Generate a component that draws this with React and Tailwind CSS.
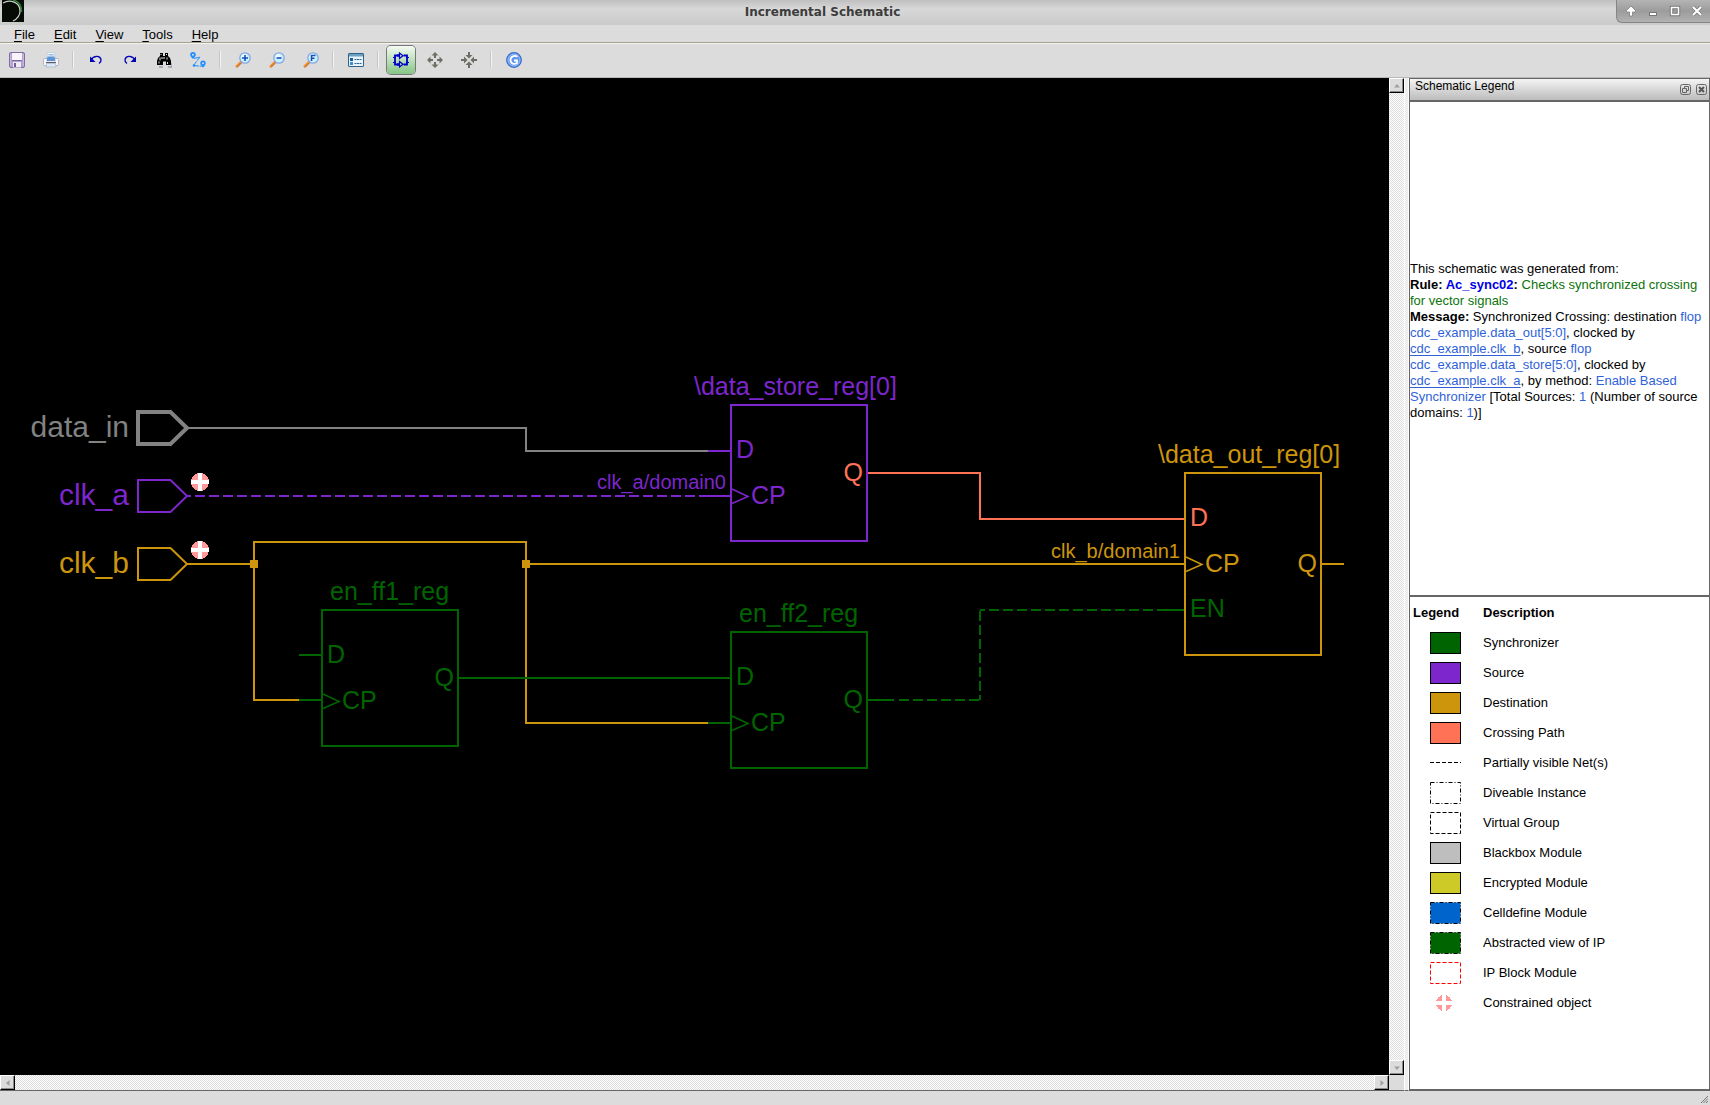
import React, { useState } from 'react';

const GREEN = '#006400';
const PURPLE = '#7d26cd';
const GOLD = '#cd950c';
const CORAL = '#ff7256';
const GRAY = '#828282';

/* ---------- toolbar icons ---------- */

const SaveIcon = () => (
  <svg viewBox="0 0 16 16" className="size-4">
    <rect x="0.5" y="0.5" width="15" height="15" rx="1.5" fill="#b3a0cf" stroke="#806ba2" />
    <rect x="3" y="1" width="10" height="7" fill="#f7f5fb" />
    <path d="M3 8.5h10" stroke="#8069a5" />
    <rect x="4" y="10" width="8" height="5.5" fill="#eeebf5" />
    <rect x="5" y="11" width="2" height="4" fill="#6f5a94" />
    <path d="M1.5 2v12M14.5 2v12" stroke="#c8b9de" />
  </svg>
);

const PrintIcon = () => (
  <svg viewBox="0 0 16 16" className="size-4">
    <path d="M4.500 0.500h7l1 6h-9z" fill="#eef4fc" stroke="#b8c8dc" strokeWidth="0.700" />
    <path d="M0.500 7.500q0-1 1-1h13q1 0 1 1v5q0 1-1 1h-13q-1 0-1-1z" fill="#f8f8fa" stroke="#a4a8b4" strokeWidth="0.800" />
    <path d="M4.500 4.500h7l1 4.500h-9z" fill="#5c94d4" />
    <path d="M5.500 2.500h5M5.500 4h5.500" stroke="#9dbfe6" />
    <path d="M3 10.500h10" stroke="#59606e" strokeWidth="1.200" />
    <path d="M3.500 11.500h9l.500 3.500h-10z" fill="#d9e8fa" stroke="#aab2c0" strokeWidth="0.700" />
  </svg>
);

const UndoIcon = () => (
  <svg viewBox="0 0 16 16" className="size-4">
    <path d="M2.500 8C6 3.500 12 3 13 7.500c.300 2-.500 3-2 4" fill="none" stroke="#0000b4" strokeWidth="1.300" />
    <path d="M2 4.500v5.500h5.500z" fill="#0000b4" />
  </svg>
);

const RedoIcon = () => (
  <svg viewBox="0 0 16 16" className="size-4">
    <path d="M13.500 8C10 3.500 4 3 3 7.500c-.300 2 .500 3 2 4" fill="none" stroke="#0000b4" strokeWidth="1.300" />
    <path d="M14 4.500v5.500H8.500z" fill="#0000b4" />
  </svg>
);

const FindIcon = () => (
  <svg viewBox="0 0 16 16" className="size-4">
    <path d="M3 15h4M12 15h4v-4" stroke="#9a9aa8" strokeWidth="1.500" fill="none" />
    <path d="M4 1h3v3h2V1h3v3l2 2 1 3v4h-5V9.500H7V13H1V9l1-3 2-2z" fill="#000" />
    <path d="M5 2v1M10.500 2v1M4 5.500v3M6 5v2M11 5.500v2M3 9.500v2M11.500 10v2M8 5v2" stroke="#fff" strokeWidth="0.900" />
  </svg>
);

const RouteIcon = () => (
  <svg viewBox="0 0 16 16" className="size-4">
    <path d="M3 0a2.800 2.800 0 0 1 2.800 2.800C5.800 4.500 3 7 3 7S.200 4.500.200 2.800A2.800 2.800 0 0 1 3 0z" fill="#1e8fff" />
    <path d="M13 8.500a2.700 2.700 0 0 1 2.700 2.700C15.700 13 13 15.500 13 15.500S10.300 13 10.300 11.200A2.700 2.700 0 0 1 13 8.500z" fill="#1e8fff" />
    <circle cx="3" cy="2.800" r="1" fill="#dcdcdc" />
    <circle cx="13" cy="11.200" r="1" fill="#dcdcdc" />
    <path d="M4 6.500l6-1.500-6.500 8.500 8 .800" fill="none" stroke="#1e8fff" strokeWidth="1" strokeDasharray="5 0.800" />
    <circle cx="4" cy="13.500" r="1.300" fill="#1e8fff" />
  </svg>
);

const ZoomIcon = ({ children }) => (
  <svg viewBox="0 0 16 16" className="size-4">
    <path d="M6.500 9.500L1 15" stroke="#f08a24" strokeWidth="2.400" />
    <path d="M7 10.500L2 15.500" stroke="#a8502c" strokeWidth="0.800" />
    <circle cx="10" cy="6" r="5.200" fill="#c9f1fd" stroke="#86a6e6" strokeWidth="1.300" />
    <circle cx="9" cy="4.500" r="2.500" fill="#f2fdff" />
    <g stroke="#1450b4" strokeWidth="1.600" fill="none">{children}</g>
  </svg>
);

const ListIcon = () => (
  <svg viewBox="0 0 16 16" className="size-4">
    <rect x="0.500" y="1.500" width="15" height="13" rx="0.500" fill="#e8f4fc" stroke="#2f6288" />
    <rect x="1" y="2" width="14" height="2.500" fill="#6f9fbf" />
    <rect x="2" y="6" width="3" height="3" fill="#1c5a96" />
    <rect x="2" y="10" width="3" height="3" fill="#3f8fd0" />
    <path d="M6.500 7.500h7M6.500 11.500h7" stroke="#35638a" strokeDasharray="2 0.500" />
  </svg>
);

const SchematicIcon = () => (
  <svg viewBox="0 0 16 16" className="size-4" fill="none" stroke="#0000c8">
    <path d="M6.500 1v5.500L10 3.700zM6.500 9.500V15l3.500-2.700z" strokeWidth="1.200" />
    <path d="M6 3.500H2v9h4M10.500 3.500h3.500v9h-3.500" strokeWidth="1.800" />
    <path d="M0 5.500h3M0 10.500h3M13 5.500h3M13 10.500h3M5 2v3M5 11v3" strokeWidth="1.200" />
  </svg>
);

const ExpandIcon = () => (
  <svg viewBox="0 0 16 16" className="size-4" fill="#6e6e66">
    <path d="M8 0l3.500 3.500h-2.500v2.500H7V3.500H4.500zM8 16l3.500-3.500h-2.500V10H7v2.500H4.500zM0 8l3.500-3.500v2.500H6v2H3.500v2.500zM16 8l-3.500-3.500v2.500H10v2h2.500v2.500z" />
  </svg>
);

const CollapseIcon = () => (
  <svg viewBox="0 0 16 16" className="size-4" fill="#6e6e66">
    <path d="M8 6.500L4.500 3H7V0h2v3h2.500zM8 9.500L4.500 13H7v3h2v-3h2.500zM6.500 8L3 4.500V7H0v2h3v2.500zM9.500 8L13 4.500V7h3v2h-3v2.500z" />
  </svg>
);

const RefreshIcon = () => (
  <svg viewBox="0 0 16 16" className="size-4">
    <circle cx="8" cy="8" r="7.300" fill="#5f97ee" stroke="#3a68cc" strokeWidth="1.200" />
    <circle cx="8" cy="8" r="6" fill="none" stroke="#a8c8f8" strokeWidth="0.800" />
    <path d="M11.500 4.800C8.500 2.800 4.500 4.500 4.500 8s4 5 6.500 3V8.500H8" fill="none" stroke="#fff" strokeWidth="1.800" />
  </svg>
);

const LogoIcon = () => (
  <svg viewBox="0 0 22 22" className="size-[22px]">
    <rect width="22" height="22" fill="#060b06" />
    <path d="M11 0Q20 2 19.500 12" fill="none" stroke="#2f7a35" strokeWidth="1.500" />
    <path d="M1 3C8-1 18 2 18 11c0 5-3 8-7 10" fill="none" stroke="#c8d0c8" strokeWidth="1.200" />
  </svg>
);

const TOOL_GROUPS = [
  [
    { name: 'Save', icon: <SaveIcon /> },
    { name: 'Print', icon: <PrintIcon /> },
  ],
  [
    { name: 'Undo', icon: <UndoIcon /> },
    { name: 'Redo', icon: <RedoIcon /> },
    { name: 'Find', icon: <FindIcon /> },
    { name: 'Trace path', icon: <RouteIcon /> },
  ],
  [
    { name: 'Zoom in', icon: <ZoomIcon><path d="M7 6h6M10 3v6" /></ZoomIcon> },
    { name: 'Zoom out', icon: <ZoomIcon><path d="M7.500 6h5" /></ZoomIcon> },
    { name: 'Zoom fit', icon: <ZoomIcon><path d="M8.500 9V3.500h4M8.500 6.200h3" /></ZoomIcon> },
  ],
  [{ name: 'Legend', icon: <ListIcon /> }],
  [
    { name: 'Incremental mode', icon: <SchematicIcon /> },
    { name: 'Expand', icon: <ExpandIcon /> },
    { name: 'Collapse', icon: <CollapseIcon /> },
  ],
  [{ name: 'Reload', icon: <RefreshIcon /> }],
];

const MENUS = ['File', 'Edit', 'View', 'Tools', 'Help'];

/* ---------- window chrome ---------- */

const TitleBar = () => (
  <header className="flex h-[25px] shrink-0 items-start bg-linear-to-b from-[#bfbfbf] via-[#d8d8d8] via-35% to-[#cacaca]">
    <div className="pl-0.5"><LogoIcon /></div>
    <h1 className="flex-1 pl-[5px] text-center font-['DejaVu_Sans'] text-[12px] leading-[25px] font-bold text-[#3c3c3c]">
      Incremental Schematic
    </h1>
    <div className="flex h-[23px] w-[94px] items-center gap-2.5 rounded-bl-md border-b border-l border-[#858585] bg-linear-to-b from-[#b4b4b4] via-[#9c9c9c] to-[#b2b2b2] pl-2">
      <button aria-label="Shade">
        <svg viewBox="0 0 12 12" className="size-3" stroke="#777" strokeWidth="0.700" fill="#fff">
          <path d="M6 1l5 5-1 1H7.500v4h-3V7H2L1 6z" />
        </svg>
      </button>
      <button aria-label="Minimize">
        <svg viewBox="0 0 12 12" className="size-3"><rect x="2.500" y="7.500" width="7" height="3" fill="#fff" stroke="#777" /></svg>
      </button>
      <button aria-label="Maximize">
        <svg viewBox="0 0 12 12" className="size-3" fill="none">
          <rect x="2.500" y="2.500" width="7" height="7" stroke="#777" strokeWidth="3.500" />
          <rect x="2.500" y="2.500" width="7" height="7" stroke="#fff" strokeWidth="1.500" />
        </svg>
      </button>
      <button aria-label="Close">
        <svg viewBox="0 0 12 12" className="size-3">
          <path d="M2 2l8 8M10 2l-8 8" stroke="#777" strokeWidth="3.600" />
          <path d="M2 2l8 8M10 2l-8 8" stroke="#fff" strokeWidth="2.200" />
        </svg>
      </button>
    </div>
  </header>
);

const MenuBar = () => (
  <nav className="flex h-[19px] shrink-0 gap-[19px] border-b border-[#f5f3ee] pt-0.5 pl-3.5 text-[13px] leading-4 text-black shadow-[inset_0_-1px_0_#a5a294]">
    {MENUS.map((menu) => (
      <button key={menu}>
        <span className="underline underline-offset-2">{menu[0]}</span>{menu.slice(1)}
      </button>
    ))}
  </nav>
);

const ToolBar = ({ active, onSelect }) => (
  <div className="flex h-[34px] shrink-0 items-center border-b border-[#b9b9b9] pb-0.5">
    {TOOL_GROUPS.map((group, i) => (
      <React.Fragment key={i}>
        {i > 0 && <div className="mx-[5px] h-[17px] w-px bg-[#f4f4f4] shadow-[-1px_0_0_#c6c6c6]" />}
        {group.map((tool) => (
          <button
            key={tool.name}
            aria-label={tool.name}
            onClick={() => onSelect(tool.name)}
            className={`mx-[3px] flex size-7 items-center justify-center rounded-[4px] ${
              active === tool.name ? 'bg-linear-to-b from-[#f4faf3] to-[#84c484] ring-1 ring-[#777]' : ''
            }`}
          >
            {tool.icon}
          </button>
        ))}
      </React.Fragment>
    ))}
  </div>
);

const ScrollButton = ({ label, d }) => (
  <button
    aria-label={label}
    className="flex size-[15px] shrink-0 items-center justify-center border border-t-white border-r-black border-b-black border-l-white bg-[#dcdcdc] shadow-[inset_-1px_-1px_0_#8c8c8c]"
  >
    <svg viewBox="0 0 8 8" className="size-2"><path d={d} fill="#a0a0a0" /></svg>
  </button>
);

/* ---------- schematic ---------- */

const Wire = ({ d, color, dash, offset }) => (
  <path d={d} fill="none" stroke={color} strokeWidth="2" strokeDasharray={dash ? '10 4' : undefined} strokeDashoffset={offset} shapeRendering="crispEdges" />
);

const Port = ({ y, label, color, width = 2 }) => (
  <g>
    <text x="129" y={y + 9} textAnchor="end" fontSize="30" fill={color}>{label}</text>
    <path d={`M138 ${y - 16}h32.500l16.500 16-16.500 16H138z`} fill="none" stroke={color} strokeWidth={width} />
  </g>
);

const Constrained = ({ x, y }) => (
  <g shapeRendering="crispEdges">
    <circle cx={x} cy={y} r="9" fill="#ff9999" />
    <path d={`M${x} ${y - 9}v18M${x - 9} ${y}h18`} stroke="#fff" strokeWidth="4" />
  </g>
);

const Flop = ({ x, y, name, nameX, color, height = 136, dColor = color, qColor = color, qWire = 68, enable }) => (
  <g fontSize="25">
    <rect x={x} y={y} width="136" height={height} fill="none" stroke={color} strokeWidth="2" shapeRendering="crispEdges" />
    <text x={nameX} y={y - 10} fill={color}>{name}</text>
    <text x={x + 5} y={y + 53} fill={dColor}>D</text>
    <path d={`M${x + 1} ${y + 84}l16 7.500-16 7`} fill="none" stroke={color} strokeWidth="1.500" />
    <text x={x + 20} y={y + 99} fill={color}>CP</text>
    {enable && <text x={x + 5} y={y + 144} fill={GREEN}>EN</text>}
    <text x={x + 132} y={y + qWire + 8} textAnchor="end" fill={qColor}>Q</text>
  </g>
);

const Schematic = () => (
  <svg
    viewBox="0 0 1389 997"
    preserveAspectRatio="xMidYMid meet"
    className="absolute inset-0 size-full font-['Liberation_Sans',sans-serif]"
    role="img"
    aria-label="Schematic"
  >
    {/* data_in */}
    <Wire d="M188 350H526V373H708" color={GRAY} />
    <Wire d="M708 373H731" color={PURPLE} />
    <Port y={350} label="data_in" color={GRAY} width={4} />

    {/* clk_a */}
    <Wire d="M187 418H699" color={PURPLE} dash offset="6" />
    <Wire d="M699 418H731" color={PURPLE} />
    <Port y={418} label="clk_a" color={PURPLE} />
    <text x="726" y="411" textAnchor="end" fontSize="20" fill={PURPLE}>clk_a/domain0</text>
    <Constrained x={200} y={404} />

    {/* clk_b */}
    <Wire d="M187 486H254M526 486H1185" color={GOLD} />
    <Wire d="M299 622H254V464H526V645H708" color={GOLD} />
    <Port y={486} label="clk_b" color={GOLD} />
    <text x="1180" y="480" textAnchor="end" fontSize="20" fill={GOLD}>clk_b/domain1</text>
    <rect x="250" y="482" width="8" height="8" fill={GOLD} />
    <rect x="522" y="482" width="8" height="8" fill={GOLD} />
    <Constrained x={200} y={472} />

    {/* enable synchronizer */}
    <Wire d="M299 577H322M299 622H322M458 600H731M708 645H731M867 622H894" color={GREEN} />
    <Wire d="M899 622H980" color={GREEN} dash />
    <Wire d="M980 533V622" color={GREEN} dash />
    <Wire d="M980 532H1157" color={GREEN} dash offset="5" />
    <Wire d="M1157 532H1185" color={GREEN} />

    {/* crossing path */}
    <Wire d="M867 395H980V441H1185" color={CORAL} />
    <Wire d="M1321 486H1344" color={GOLD} />

    <Flop x={322} y={532} name="en_ff1_reg" nameX={330} color={GREEN} />
    <Flop x={731} y={554} name="en_ff2_reg" nameX={739} color={GREEN} />
    <Flop x={731} y={327} name="\data_store_reg[0]" nameX={694} color={PURPLE} qColor={CORAL} />
    <Flop x={1185} y={395} name="\data_out_reg[0]" nameX={1158} color={GOLD} height={182} dColor={CORAL} qWire={91} enable />
  </svg>
);

/* ---------- legend dock ---------- */

const LEGEND = [
  { text: 'Synchronizer', fill: GREEN, stroke: '#000' },
  { text: 'Source', fill: PURPLE, stroke: '#000' },
  { text: 'Destination', fill: GOLD, stroke: '#000' },
  { text: 'Crossing Path', fill: CORAL, stroke: '#000' },
  { text: 'Partially visible Net(s)', line: true },
  { text: 'Diveable Instance', fill: 'none', stroke: '#000', dash: '4 2 1 2' },
  { text: 'Virtual Group', fill: 'none', stroke: '#000', dash: '4 2' },
  { text: 'Blackbox Module', fill: '#bebebe', stroke: '#000' },
  { text: 'Encrypted Module', fill: '#cdc926', stroke: '#000' },
  { text: 'Celldefine Module', fill: '#0064cd', stroke: '#000', dash: '4 2 1 2' },
  { text: 'Abstracted view of IP', fill: GREEN, stroke: '#000', dash: '4 2 1 2' },
  { text: 'IP Block Module', fill: 'none', stroke: '#ff0000', dash: '4 2' },
  { text: 'Constrained object', constrained: true },
];

const Swatch = ({ item }) => (
  <svg viewBox="0 0 31 22" className="block h-[22px] w-[31px]">
    {item.line && <path d="M0 10.500h31" stroke="#000" strokeDasharray="4 2" />}
    {item.constrained && (
      <g shapeRendering="crispEdges">
        <circle cx="14" cy="11" r="8" fill="#ff9999" />
        <path d="M14 2v18M5 11h18" stroke="#fff" strokeWidth="4" />
      </g>
    )}
    {item.fill && (
      <rect x="0.500" y="0.500" width="30" height="21" fill={item.fill} stroke={item.stroke} strokeDasharray={item.dash} />
    )}
  </svg>
);

const Blue = ({ children }) => <span className="text-[#2f62d9]">{children}</span>;

const RuleInfo = () => (
  <section className="flex h-[493px] shrink-0 items-center bg-white pb-4">
    <p className="text-[13px] leading-4 text-black">
      This schematic was generated from:<br />
      <b>Rule: <a href="#rule" className="text-[#0000e6]">Ac_sync02</a>:</b>{' '}
      <span className="text-[#0a730a]">Checks synchronized crossing for vector signals</span><br />
      <b>Message:</b> Synchronized Crossing: destination <Blue>flop cdc_example.data_out[5:0]</Blue>, clocked by{' '}
      <a href="#clk_b" className="text-[#2f62d9] underline underline-offset-2">cdc_example.clk_b</a>, source{' '}
      <Blue>flop cdc_example.data_store[5:0]</Blue>, clocked by{' '}
      <a href="#clk_a" className="text-[#2f62d9] underline underline-offset-2">cdc_example.clk_a</a>, by method:{' '}
      <Blue>Enable Based Synchronizer</Blue> [Total Sources: <Blue>1</Blue> (Number of source domains: <Blue>1</Blue>)]
    </p>
  </section>
);

const LegendTable = () => (
  <section className="flex-1 border-t-2 border-[#666] bg-white pt-px">
    <table className="w-full table-fixed text-left text-[13px] leading-4 text-black">
      <thead>
        <tr className="h-[30px]">
          <th className="w-[73px] pl-[3px] font-bold">Legend</th>
          <th className="font-bold">Description</th>
        </tr>
      </thead>
      <tbody>
        {LEGEND.map((item) => (
          <tr key={item.text} className="h-[30px]">
            <td className="pl-5"><Swatch item={item} /></td>
            <td>{item.text}</td>
          </tr>
        ))}
      </tbody>
    </table>
  </section>
);

const LegendDock = () => (
  <aside className="flex w-[301px] shrink-0 flex-col border border-b-2 border-[#666] bg-white">
    <div className="flex h-[23px] shrink-0 items-start rounded-t-sm border-b-2 border-[#666] bg-linear-to-b from-[#f4f4f4] to-[#bcbcbc] pr-0.5 pl-[5px]">
      <h2 className="flex-1 text-[12px] leading-[14px] text-black">Schematic Legend</h2>
      <div className="flex gap-[5px] pt-[5px]">
        <button aria-label="Float">
          <svg viewBox="0 0 11 11" className="size-[11px]" fill="none" stroke="#666">
            <rect x="0.500" y="0.500" width="10" height="10" rx="2" />
            <path d="M4.500 4V2.500h4v4H7M2.500 4.500h4v4h-4z" />
          </svg>
        </button>
        <button aria-label="Close dock">
          <svg viewBox="0 0 11 11" className="size-[11px]" fill="none" stroke="#666">
            <rect x="0.500" y="0.500" width="10" height="10" rx="2" />
            <path d="M3 3l5 5M8 3L3 8" stroke="#555" strokeWidth="2" />
          </svg>
        </button>
      </div>
    </div>
    <RuleInfo />
    <LegendTable />
  </aside>
);

const App = () => {
  const [activeTool, setActiveTool] = useState('Incremental mode');

  return (
    <div className="flex h-screen flex-col overflow-hidden bg-[#dcdcdc] font-['Liberation_Sans',sans-serif]">
      <TitleBar />
      <MenuBar />
      <ToolBar active={activeTool} onSelect={setActiveTool} />

      <main className="flex min-h-0 flex-1">
        <div className="grid min-w-0 flex-1 grid-cols-[1fr_15px] grid-rows-[1fr_15px] border-b border-[#666]">
          <div className="relative overflow-hidden bg-black">
            <Schematic />
          </div>
          <div className="flex flex-col justify-between bg-[repeating-conic-gradient(#dcdcdc_0_25%,#ffffff_0_50%)] bg-[length:2px_2px]">
            <ScrollButton label="Scroll up" d="M4 2l3 3.500H1z" />
            <ScrollButton label="Scroll down" d="M4 6l3-3.500H1z" />
          </div>
          <div className="flex justify-between bg-[repeating-conic-gradient(#dcdcdc_0_25%,#ffffff_0_50%)] bg-[length:2px_2px]">
            <ScrollButton label="Scroll left" d="M2 4l3.500-3v6z" />
            <ScrollButton label="Scroll right" d="M6 4L2.500 1v6z" />
          </div>
        </div>
        <div className="w-[5px] shrink-0 border-x border-b border-x-white border-b-[#666] bg-[#eeeeee]" />
        <LegendDock />
      </main>

      <footer className="flex h-3.5 shrink-0 items-end justify-end p-0.5">
        <svg viewBox="0 0 7 7" className="size-[7px]" stroke="#777">
          <path d="M0 7l7-7M2.500 7L7 2.500M5 7l2-2" />
        </svg>
      </footer>
    </div>
  );
};

export default App;
